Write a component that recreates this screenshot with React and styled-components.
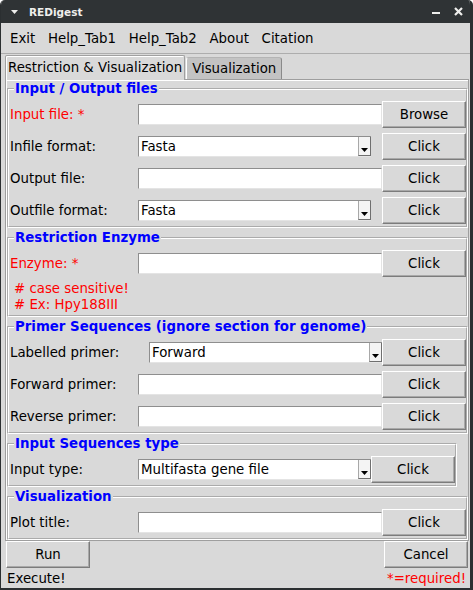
import React from "react";
import styled, { createGlobalStyle } from "styled-components";

const Global = createGlobalStyle`
  html, body { margin: 0; padding: 0; background: #ffffff; }
  body { font-family: "DejaVu Sans", "Liberation Sans", sans-serif; font-size: 13.33px; }
  #root { width: 473px; height: 590px; }
`;

const Window = styled.div`
  width: 473px;
  height: 590px;
  box-sizing: border-box;
  background: #d9d9d9;
  border-left: 1px solid #2b2f31;
  border-right: 3px solid #2b2f31;
  border-bottom: 2px solid #2b2f31;
  border-radius: 5px 5px 0 0;
  overflow: hidden;
  display: flex;
  flex-direction: column;
  font-family: "DejaVu Sans", "Liberation Sans", sans-serif;
  font-size: 13.33px;
  color: #000;
`;

const TitleBar = styled.div`
  flex: none;
  height: 23px;
  background: #2f3335;
  color: #eeeeec;
  display: flex;
  align-items: center;
  padding: 0 7px 0 10px;
`;

const Title = styled.span`
  margin-left: 11px;
  font-weight: bold;
  font-size: 10.5px;
`;

const Controls = styled.div`
  margin-left: auto;
  display: flex;
  align-items: center;
  gap: 14px;
`;

const MenuBar = styled.div`
  flex: none;
  height: 30px;
  border-bottom: 1px solid #adadad;
  display: flex;
  align-items: center;
  gap: 12.7px;
  padding-left: 9px;
`;

const MenuItem = styled.span`
  color: #000;
`;

const TabStrip = styled.div`
  flex: none;
  position: relative;
  z-index: 1;
  display: flex;
  align-items: flex-end;
  padding: 1px 0 0 4px;
  margin-bottom: -1px;
`;

const Tab = styled.div`
  box-sizing: border-box;
  display: flex;
  align-items: center;
  white-space: nowrap;
  ${(p) =>
    p.$active
      ? `
    height: 25px;
    background: #d9d9d9;
    border: 1px solid #a0a0a0;
    border-bottom: none;
    box-shadow: inset 1px 1px 0 #ffffff;
    padding: 0 2px 2px 2px;
    border-radius: 2px 2px 0 0;
  `
      : `
    height: 22px;
    margin-bottom: 1px;
    margin-left: 1px;
    background: #c3c3c3;
    border-top: 1px solid #b4b4b4;
    border-left: 1px solid #ffffff;
    border-right: 1px solid #8a8a8a;
    padding: 0 5px;
    border-radius: 3px 3px 0 0;
  `}
`;

const Pane = styled.div`
  flex: none;
  margin-left: 4px;
  width: 464px;
  box-sizing: border-box;
  border: 1px solid #9e9e9e;
  box-shadow: inset 1px 1px 0 #ffffff;
  padding: 1px 0 0 1px;
  display: flex;
  flex-direction: column;
  align-items: flex-start;
  gap: 2px;
`;

const Frame = styled.fieldset`
  margin: 0;
  padding: 4px 0 2px 1px;
  border: 2px groove #ffffff;
  min-width: 0;
`;

const Legend = styled.legend`
  margin-left: 4px;
  padding: 0 1px;
  font-weight: bold;
  font-size: 13.33px;
  line-height: 16px;
  color: #0000ff;
`;

const Grid = styled.div`
  display: grid;
  grid-template-columns: 128px auto 84px;
  grid-auto-rows: 27px;
  row-gap: 5px;
  align-items: center;
`;

const Label = styled.span`
  color: ${(p) => (p.$required ? "#ff0000" : "#000000")};
  white-space: nowrap;
`;

const Entry = styled.div`
  box-sizing: border-box;
  width: 244px;
  height: 21px;
  background: #ffffff;
  border-top: 1px solid #8e8e8e;
  border-left: 1px solid #8e8e8e;
  border-bottom: 1px solid #e4e4e4;
  border-right: 1px solid #e4e4e4;
`;

const Combo = styled.div`
  box-sizing: border-box;
  width: 233px;
  height: 21px;
  justify-self: ${(p) => (p.$end ? "end" : "start")};
  display: flex;
  background: #ffffff;
  border-top: 1px solid #8e8e8e;
  border-left: 1px solid #8e8e8e;
  border-bottom: 1px solid #e4e4e4;
`;

const ComboText = styled.span`
  flex: 1;
  padding-left: 2px;
  line-height: 19px;
  white-space: nowrap;
  overflow: hidden;
`;

const ArrowBox = styled.span`
  box-sizing: border-box;
  width: 13px;
  height: 100%;
  background: #f4f4f4;
  border-left: 1px solid #a8a8a8;
  border-right: 1px solid #6f6f6f;
  border-bottom: 1px solid #6f6f6f;
  display: flex;
  align-items: flex-end;
  justify-content: center;
  padding-bottom: 3px;
`;

const Button = styled.div`
  box-sizing: border-box;
  width: 84px;
  height: 27px;
  background: #d9d9d9;
  border-top: 1px solid #ffffff;
  border-left: 1px solid #ffffff;
  border-right: 1px solid #7c7c7c;
  border-bottom: 1px solid #7c7c7c;
  box-shadow: inset -1px -1px 0 #a9a9a9;
  display: flex;
  align-items: center;
  justify-content: center;
  color: #000;
  padding-bottom: 1px;
`;

const Notes = styled.div`
  margin: 4px 0 0 4px;
  color: #ff0000;
  line-height: 16px;
`;

const FooterRow = styled.div`
  flex: none;
  display: flex;
  justify-content: space-between;
  padding: 0 2px 0 5px;
`;

const StatusRow = styled.div`
  flex: none;
  height: 20px;
  display: flex;
  align-items: center;
  justify-content: space-between;
  padding: 0 4px 0 6px;
`;

const Status = styled.span`
  color: ${(p) => (p.$red ? "#ff0000" : "#000000")};
`;

const Arrow = () => (
  <svg width="7" height="4" viewBox="0 0 7 4">
    <polygon points="0,0 7,0 3.5,4" fill="#000" />
  </svg>
);

const ComboBox = ({ value, end }) => (
  <Combo $end={end}>
    <ComboText>{value}</ComboText>
    <ArrowBox>
      <Arrow />
    </ArrowBox>
  </Combo>
);

const Row = ({ label, required, children, button = "Click" }) => (
  <>
    <Label $required={required}>{label}</Label>
    {children}
    <Button>{button}</Button>
  </>
);

export default function App() {
  return (
    <>
      <Global />
      <Window>
        <TitleBar>
          <svg width="7" height="4" viewBox="0 0 7 4">
            <polygon points="0,0 7,0 3.5,4" fill="#eeeeec" />
          </svg>
          <Title>REDigest</Title>
          <Controls>
            <svg width="8" height="8" viewBox="0 0 8 8">
              <rect x="0" y="4" width="8" height="2" fill="#eeeeec" />
            </svg>
            <svg width="9" height="9" viewBox="0 0 9 9">
              <path d="M1 1 L8 8 M8 1 L1 8" stroke="#eeeeec" strokeWidth="2.2" />
            </svg>
          </Controls>
        </TitleBar>

        <MenuBar>
          <MenuItem>Exit</MenuItem>
          <MenuItem>Help_Tab1</MenuItem>
          <MenuItem>Help_Tab2</MenuItem>
          <MenuItem>About</MenuItem>
          <MenuItem>Citation</MenuItem>
        </MenuBar>

        <TabStrip>
          <Tab $active>Restriction &amp; Visualization</Tab>
          <Tab>Visualization</Tab>
        </TabStrip>

        <Pane>
          <Frame>
            <Legend>Input / Output files</Legend>
            <Grid>
              <Row label="Input file: *" required button="Browse">
                <Entry />
              </Row>
              <Row label="Infile format:">
                <ComboBox value="Fasta" />
              </Row>
              <Row label="Output file:">
                <Entry />
              </Row>
              <Row label="Outfile format:">
                <ComboBox value="Fasta" />
              </Row>
            </Grid>
          </Frame>

          <Frame>
            <Legend>Restriction Enzyme</Legend>
            <Grid>
              <Row label="Enzyme: *" required>
                <Entry />
              </Row>
            </Grid>
            <Notes>
              <div># case sensitive!</div>
              <div># Ex: Hpy188III</div>
            </Notes>
          </Frame>

          <Frame>
            <Legend>Primer Sequences (ignore section for genome)</Legend>
            <Grid>
              <Row label="Labelled primer:">
                <ComboBox value="Forward" end />
              </Row>
              <Row label="Forward primer:">
                <Entry />
              </Row>
              <Row label="Reverse primer:">
                <Entry />
              </Row>
            </Grid>
          </Frame>

          <Frame>
            <Legend>Input Sequences type</Legend>
            <Grid>
              <Row label="Input type:">
                <ComboBox value="Multifasta gene file" />
              </Row>
            </Grid>
          </Frame>

          <Frame>
            <Legend>Visualization</Legend>
            <Grid>
              <Row label="Plot title:">
                <Entry />
              </Row>
            </Grid>
          </Frame>
        </Pane>

        <FooterRow>
          <Button>Run</Button>
          <Button>Cancel</Button>
        </FooterRow>

        <StatusRow>
          <Status>Execute!</Status>
          <Status $red>*=required!</Status>
        </StatusRow>
      </Window>
    </>
  );
}
